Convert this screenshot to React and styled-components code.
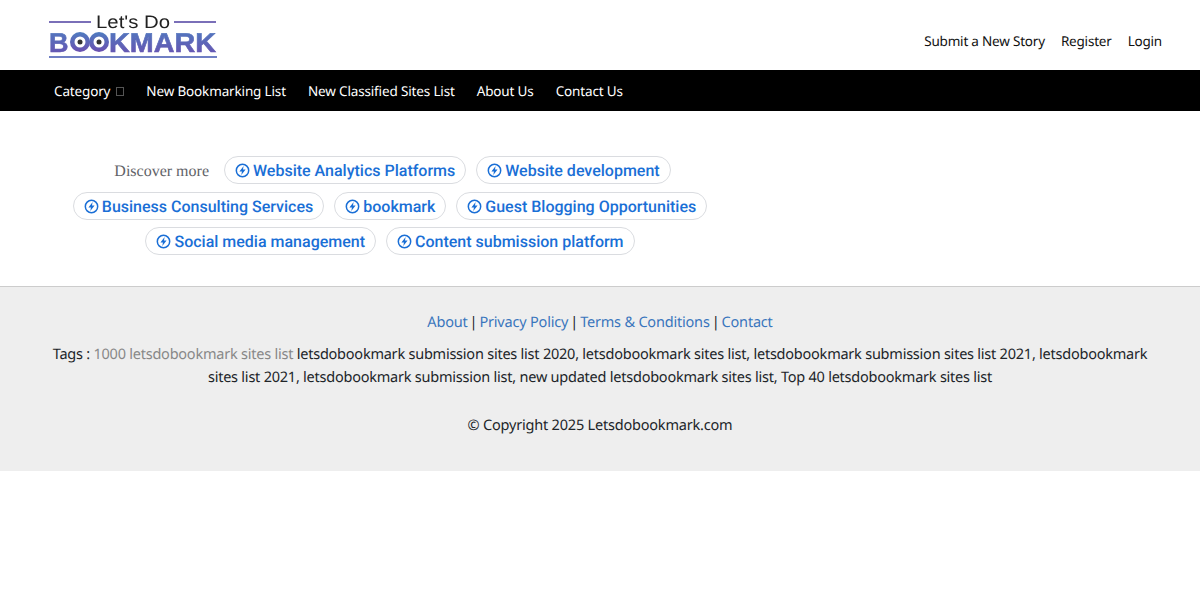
import styled, { createGlobalStyle } from "styled-components";

const Global = createGlobalStyle`
  html, body { margin: 0; padding: 0; background: #fff; }
  body {
    font-family: "Noto Sans", "Open Sans", sans-serif;
    font-size: 14px;
    color: #212529;
    text-rendering: geometricPrecision;
  }
  a { text-decoration: none; color: inherit; }
`;

const Header = styled.header`
  height: 70px;
  padding: 0 38px 0 48px;
  display: flex;
  align-items: flex-start;
  justify-content: space-between;
`;

const LogoLink = styled.a`
  display: block;
  width: 170px;
  height: 50px;
  margin-top: 12px;
  filter: blur(0.3px);
`;

const TopLinks = styled.nav`
  display: flex;
  gap: 16px;
  margin-top: 32px;
  font-size: 13.5px;
  line-height: 18px;
  letter-spacing: -0.2px;
  color: #111;
`;

const NavBar = styled.nav`
  height: 41px;
  box-sizing: border-box;
  padding: 1px 0 0 54px;
  background: #000;
  display: flex;
  align-items: center;
  gap: 22px;
  font-size: 13.5px;
  letter-spacing: -0.15px;
  color: #fff;
`;

const Caret = styled.span`
  display: inline-block;
  width: 6px;
  height: 7px;
  margin-left: 6px;
  border: 1px solid #555;
`;

const Discover = styled.section`
  width: 780px;
  padding: 45px 0 31px;
  display: flex;
  flex-direction: column;
  align-items: center;
  gap: 7px;
`;

const ChipRow = styled.div`
  display: flex;
  align-items: center;
  gap: 10px;
  height: 28px;
  &:nth-child(2) { margin-top: 1px; }
`;

const Label = styled.span`
  font-family: "Liberation Serif", serif;
  font-size: 16px;
  color: #5f6368;
  margin: 3px 5px 0 5px;
`;

const Chip = styled.a`
  height: 28px;
  box-sizing: border-box;
  display: flex;
  align-items: center;
  gap: 3px;
  padding: 0 10px;
  border: 1px solid #dadce0;
  border-radius: 14px;
  font-family: Roboto, sans-serif;
  font-weight: 500;
  font-size: 16px;
  color: #1a6fd6;
`;

const Footer = styled.footer`
  height: 185px;
  box-sizing: border-box;
  background: #eee;
  border-top: 1px solid #ccc;
  padding: 24px 40px 0;
  text-align: center;
  font-size: 14.5px;
  line-height: 23px;
  letter-spacing: -0.2px;
  color: #212529;
`;

const FooterLinks = styled.p`
  margin: 0 0 9px;
  a { color: #3a76bd; }
`;

const Sep = styled.span`
  margin: 0 -1.5px;
`;

const Tags = styled.p`
  margin: 0 0 25px;
  letter-spacing: -0.23px;
  span { color: #888; }
`;

const Copyright = styled.p`
  margin: 0;
`;

function Logo() {
  return (
    <svg width="170" height="50" viewBox="0 0 170 50">
      <defs>
        <linearGradient id="bm" x1="0" y1="0" x2="0" y2="1">
          <stop offset="0" stopColor="#4f7cc0" />
          <stop offset="1" stopColor="#6a4fb0" />
        </linearGradient>
      </defs>
      <rect x="1" y="9" width="42" height="2" fill="#7a6fb8" />
      <rect x="126" y="9" width="42" height="2" fill="#7a6fb8" />
      <text x="48" y="16" fontFamily="Liberation Sans" fontSize="18" fill="#222" textLength="74" lengthAdjust="spacingAndGlyphs">Let's Do</text>
      <text x="1" y="40" fontFamily="Liberation Sans" fontWeight="700" fontSize="27" fill="url(#bm)" stroke="url(#bm)" strokeWidth="0.6">B</text>
      <circle cx="32" cy="30" r="10" fill="url(#bm)" />
      <circle cx="32" cy="30" r="5.5" fill="#fff" />
      <circle cx="32" cy="30" r="2.5" fill="#333" />
      <circle cx="51" cy="30" r="10" fill="url(#bm)" />
      <circle cx="51" cy="30" r="5.5" fill="#fff" />
      <circle cx="51" cy="30" r="2.5" fill="#333" />
      <text x="61" y="40" fontFamily="Liberation Sans" fontWeight="700" fontSize="27" fill="url(#bm)" stroke="url(#bm)" strokeWidth="0.6" textLength="107" lengthAdjust="spacingAndGlyphs">KMARK</text>
      <rect x="1" y="44" width="168" height="2" fill="#6f7fc4" />
    </svg>
  );
}

function BoltCircle() {
  return (
    <svg width="15" height="15" viewBox="0 0 16 16">
      <circle cx="8" cy="8" r="6.6" fill="none" stroke="#1a6fd6" strokeWidth="1.6" />
      <path d="M9.2 3.2 4.7 9h2.7l-.7 3.8L11.3 7H8.5z" fill="#1a6fd6" />
    </svg>
  );
}

function Pill({ children }) {
  return (
    <Chip href="#">
      <BoltCircle />
      {children}
    </Chip>
  );
}

export default function App() {
  return (
    <>
      <Global />
      <Header>
        <LogoLink href="#"><Logo /></LogoLink>
        <TopLinks>
          <a href="#">Submit a New Story</a>
          <a href="#">Register</a>
          <a href="#">Login</a>
        </TopLinks>
      </Header>
      <NavBar>
        <a href="#">Category<Caret /></a>
        <a href="#">New Bookmarking List</a>
        <a href="#">New Classified Sites List</a>
        <a href="#">About Us</a>
        <a href="#">Contact Us</a>
      </NavBar>
      <Discover>
        <ChipRow>
          <Label>Discover more</Label>
          <Pill>Website Analytics Platforms</Pill>
          <Pill>Website development</Pill>
        </ChipRow>
        <ChipRow>
          <Pill>Business Consulting Services</Pill>
          <Pill>bookmark</Pill>
          <Pill>Guest Blogging Opportunities</Pill>
        </ChipRow>
        <ChipRow>
          <Pill>Social media management</Pill>
          <Pill>Content submission platform</Pill>
        </ChipRow>
      </Discover>
      <Footer>
        <FooterLinks>
          <a href="#">About</a> <Sep>|</Sep> <a href="#">Privacy Policy</a> <Sep>|</Sep> <a href="#">Terms &amp; Conditions</a> <Sep>|</Sep> <a href="#">Contact</a>
        </FooterLinks>
        <Tags>
          Tags : <span>1000 letsdobookmark sites list</span> letsdobookmark submission sites list 2020, letsdobookmark sites list, letsdobookmark submission sites list 2021, letsdobookmark sites list 2021, letsdobookmark submission list, new updated letsdobookmark sites list, Top 40 letsdobookmark sites list
        </Tags>
        <Copyright>© Copyright 2025 Letsdobookmark.com</Copyright>
      </Footer>
    </>
  );
}
